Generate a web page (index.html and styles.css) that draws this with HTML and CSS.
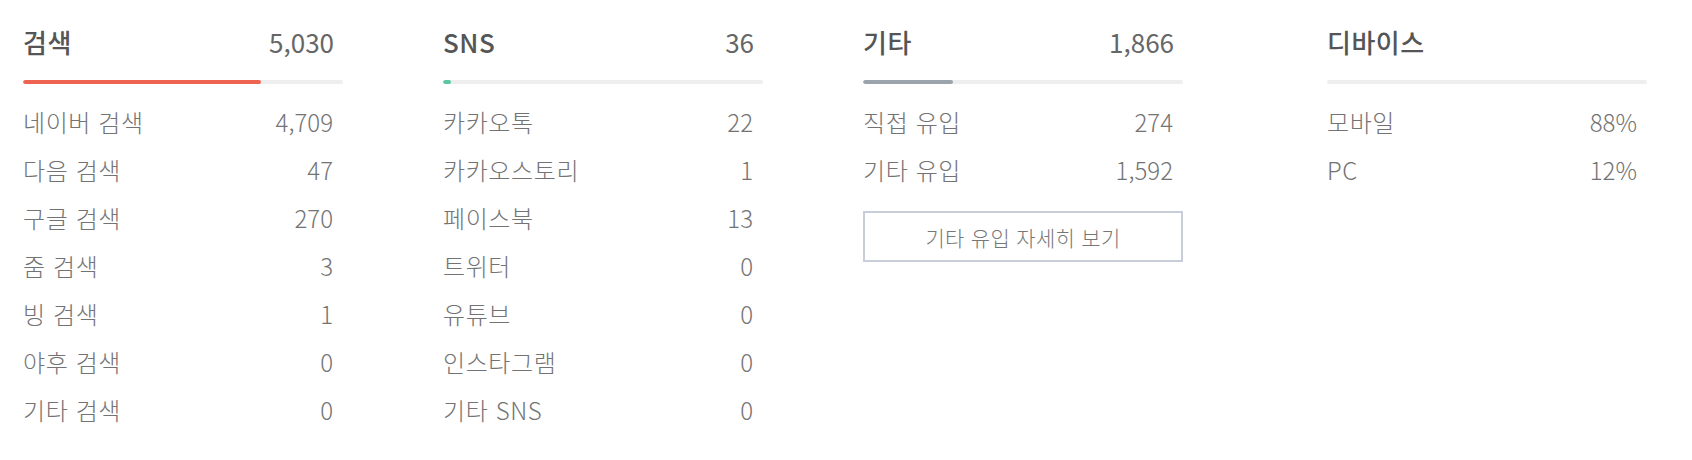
FILE: index.html
```html
<!DOCTYPE html>
<html lang="ko">
<head>
<meta charset="utf-8">
<title>유입 경로</title>
<link rel="stylesheet" href="styles.css">
</head>
<body>
<div class="stats">
  <section class="col">
    <div class="head"><span class="title">검색</span><span class="total">5,030</span></div>
    <div class="bar"><div class="fill fill-red" style="width:74.4%"></div></div>
    <ul class="list">
      <li class="row"><span class="label">네이버 검색</span><span class="value">4,709</span></li>
      <li class="row"><span class="label">다음 검색</span><span class="value">47</span></li>
      <li class="row"><span class="label">구글 검색</span><span class="value">270</span></li>
      <li class="row"><span class="label">줌 검색</span><span class="value">3</span></li>
      <li class="row"><span class="label">빙 검색</span><span class="value">1</span></li>
      <li class="row"><span class="label">야후 검색</span><span class="value">0</span></li>
      <li class="row"><span class="label">기타 검색</span><span class="value">0</span></li>
    </ul>
  </section>
  <section class="col">
    <div class="head"><span class="title">SNS</span><span class="total">36</span></div>
    <div class="bar"><div class="fill fill-green" style="width:2.5%"></div></div>
    <ul class="list">
      <li class="row"><span class="label">카카오톡</span><span class="value">22</span></li>
      <li class="row"><span class="label">카카오스토리</span><span class="value">1</span></li>
      <li class="row"><span class="label">페이스북</span><span class="value">13</span></li>
      <li class="row"><span class="label">트위터</span><span class="value">0</span></li>
      <li class="row"><span class="label">유튜브</span><span class="value">0</span></li>
      <li class="row"><span class="label">인스타그램</span><span class="value">0</span></li>
      <li class="row"><span class="label">기타 SNS</span><span class="value">0</span></li>
    </ul>
  </section>
  <section class="col">
    <div class="head"><span class="title">기타</span><span class="total">1,866</span></div>
    <div class="bar"><div class="fill fill-gray" style="width:28.1%"></div></div>
    <ul class="list">
      <li class="row"><span class="label">직접 유입</span><span class="value">274</span></li>
      <li class="row"><span class="label">기타 유입</span><span class="value">1,592</span></li>
    </ul>
    <button class="more" type="button">기타 유입 자세히 보기</button>
  </section>
  <section class="col col-device">
    <div class="head"><span class="title">디바이스</span></div>
    <div class="bar"></div>
    <ul class="list">
      <li class="row"><span class="label">모바일</span><span class="value">88%</span></li>
      <li class="row"><span class="label">PC</span><span class="value">12%</span></li>
    </ul>
  </section>
</div>
</body>
</html>
```

FILE: styles.css
```css
* { box-sizing: border-box; }

body {
  margin: 0;
  background: #ffffff;
  font-family: "Noto Sans CJK KR", "Noto Sans", sans-serif;
  color: #777777;
}

.stats {
  display: flex;
  align-items: flex-start;
  padding: 24px 0 0 23px;
  gap: 100px;
}

.col {
  width: 320px;
  flex: none;
}

.col-device {
  margin-left: 44px;
}

.head {
  display: flex;
  justify-content: space-between;
  align-items: baseline;
  height: 36px;
  line-height: 36px;
  padding-right: 9px;
  font-size: 26px;
  color: #555555;
}

.title {
  font-weight: 500;
  letter-spacing: 0.5px;
}

.total {
  font-weight: 400;
  color: #666666;
}

.bar {
  margin-top: 20px;
  height: 4px;
  border-radius: 2px;
  background: #eeeeee;
  overflow: hidden;
}

.fill {
  height: 100%;
  border-radius: 2px;
}

.fill-red { background: #ee6352; }
.fill-green { background: #5cc7a5; }
.fill-gray { background: #9ba4ad; }

.list {
  list-style: none;
  margin: 14px 0 0;
  padding: 0;
}

.row {
  display: flex;
  justify-content: space-between;
  height: 48px;
  line-height: 48px;
  padding-right: 10px;
  font-size: 24px;
  font-weight: 300;
  color: #737373;
}

.label {
  letter-spacing: 0.6px;
}

.more {
  display: block;
  width: 320px;
  height: 51px;
  margin-top: 17px;
  border: 2px solid #c8ced9;
  background: #ffffff;
  font-family: inherit;
  font-size: 21px;
  font-weight: 300;
  letter-spacing: 0.3px;
  color: #777777;
  cursor: pointer;
}
```
